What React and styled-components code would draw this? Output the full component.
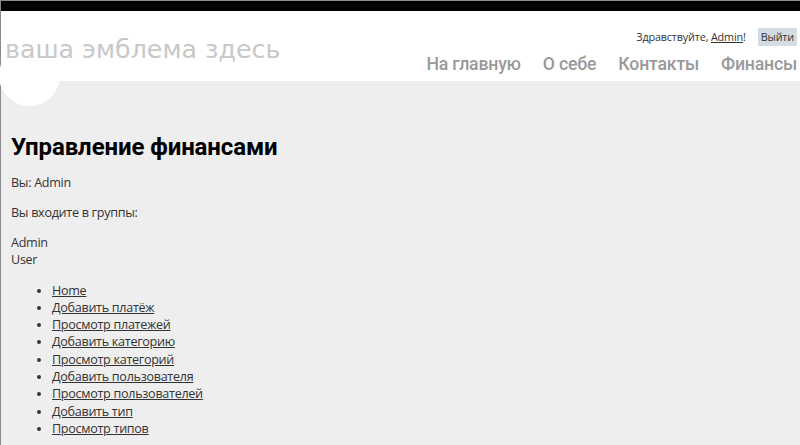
import React from 'react';
import styled, { createGlobalStyle } from 'styled-components';

const GlobalStyle = createGlobalStyle`
  html, body {
    margin: 0;
    padding: 0;
    background: #efeeef;
  }
  body {
    font-family: "Open Sans", "Noto Sans", sans-serif;
    font-size: 12.6px;
    letter-spacing: -0.3px;
    color: #333;
    overflow: hidden;
  }
`;

const Page = styled.div`
  min-height: 100vh;
  box-sizing: border-box;
  border-top: 1px solid #8a8a8a;
  border-left: 1px solid #8a8a8a;
  display: flex;
  flex-direction: column;
`;

const Header = styled.header`
  position: relative;
  height: 70px;
  background: #fff;
  border-top: 10px solid #000;
  display: flex;
  justify-content: space-between;

  &::after {
    content: '';
    position: absolute;
    left: -2px;
    top: 34px;
    width: 61px;
    height: 61px;
    border-radius: 50%;
    background: #fff;
  }
`;

const Logo = styled.div`
  position: relative;
  z-index: 1;
  margin-top: 24px;
  padding-left: 4px;
  font-family: "DejaVu Sans", sans-serif;
  font-size: 25.3px;
  letter-spacing: 0;
  line-height: 30px;
  color: #c8c8c8;
`;

const RightSide = styled.div`
  display: flex;
  flex-direction: column;
  align-items: flex-end;
  padding-top: 17px;
`;

const Login = styled.div`
  font-size: 10.8px;
  letter-spacing: -0.15px;
  line-height: 18px;
  color: #333;
  display: flex;
  align-items: center;

  a {
    color: #333;
  }
`;

const LogoutButton = styled.a`
  background: #d3dce0;
  padding: 0 3px;
  margin-left: 12px;
  margin-right: 3px;
  text-decoration: none;
`;

const Menu = styled.ul`
  display: flex;
  gap: 22px;
  margin: 6px 3px 0 0;
  padding: 0;
  list-style: none;
  font-family: Roboto, "Open Sans", sans-serif;
  font-size: 17.7px;
  font-weight: 500;
  letter-spacing: -0.2px;
  line-height: 24px;

  a {
    color: #999;
    text-decoration: none;
  }
`;

const Main = styled.main`
  flex: 1;
  background: #efeeef;
  padding: 30px 0 0 10px;
`;

const Title = styled.h1`
  margin: 20px 0 11px;
  font-family: Roboto, "Open Sans", sans-serif;
  font-size: 24px;
  font-weight: 700;
  letter-spacing: -0.1px;
  line-height: 32px;
  color: #000;
`;

const Para = styled.p`
  margin: 0 0 12px;
  line-height: 18px;
`;

const Groups = styled.ul`
  margin: 0 0 13px;
  padding: 0;
  line-height: 17.3px;
`;

const Links = styled.ul`
  margin: 0;
  padding-left: 41px;
  line-height: 17.3px;

  li::marker {
    font-size: 11px;
  }

  a {
    color: #333;
  }
`;

const groups = ['Admin', 'User'];

const links = [
  'Home',
  'Добавить платёж',
  'Просмотр платежей',
  'Добавить категорию',
  'Просмотр категорий',
  'Добавить пользователя',
  'Просмотр пользователей',
  'Добавить тип',
  'Просмотр типов',
];

export default function App() {
  return (
    <>
      <GlobalStyle />
      <Page>
        <Header>
          <Logo>ваша эмблема здесь</Logo>
          <RightSide>
            <Login>
              Здравствуйте,&nbsp;<a href="#user">Admin</a>!
              <LogoutButton href="#logout">Выйти</LogoutButton>
            </Login>
            <Menu>
              <li><a href="#home">На главную</a></li>
              <li><a href="#about">О себе</a></li>
              <li><a href="#contact">Контакты</a></li>
              <li><a href="#finance">Финансы</a></li>
            </Menu>
          </RightSide>
        </Header>
        <Main>
          <Title>Управление финансами</Title>
          <Para>Вы: Admin</Para>
          <Para>Вы входите в группы:</Para>
          <Groups>
            {groups.map((g) => (
              <li key={g}>{g}</li>
            ))}
          </Groups>
          <Links>
            {links.map((l) => (
              <li key={l}>
                <a href={'#' + l}>{l}</a>
              </li>
            ))}
          </Links>
        </Main>
      </Page>
    </>
  );
}
